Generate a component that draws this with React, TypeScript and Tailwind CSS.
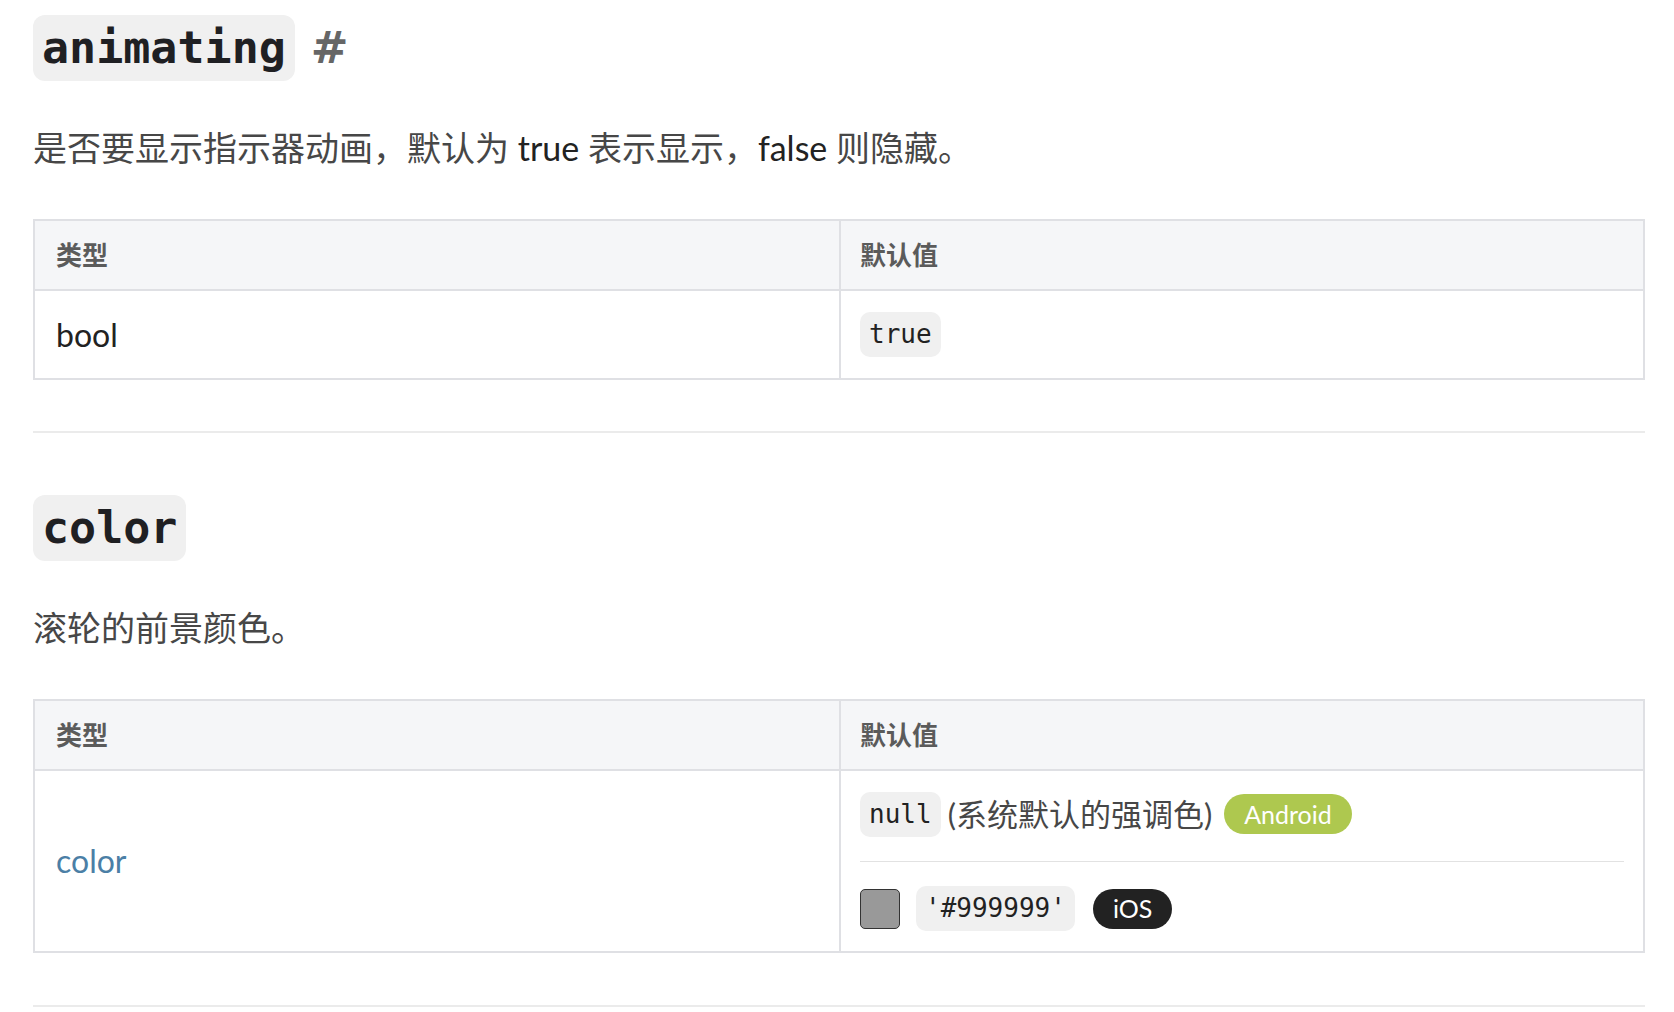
const sans = "font-['Lato','Noto_Sans_CJK_SC',sans-serif]";
const mono = "font-['DejaVu_Sans_Mono','Noto_Sans_CJK_SC',monospace]";

const Code = ({ children }: { children: string }) => (
  <code className={`${mono} inline-block h-[45px] px-[9px] rounded-[10px] bg-[#f0f0f0] text-[26px] leading-[45px] text-[#222]`}>
    {children}
  </code>
);

const Badge = ({ label, color }: { label: string; color: string }) => (
  <span className={`${sans} inline-flex items-center h-[40px] px-[20px] rounded-full text-[25px] leading-none text-white ${color}`}>
    {label}
  </span>
);

const Heading = ({ name, anchor }: { name: string; anchor?: boolean }) => (
  <h3 className="flex items-center h-[66px]">
    <code className={`${mono} px-[9px] rounded-[12px] bg-[#f0f0f0] text-[45px] font-bold leading-[66px] text-[#1f2023]`}>
      {name}
    </code>
    {anchor && (
      <span className="ml-[16px] font-['DejaVu_Sans',sans-serif] text-[45px] font-bold text-[#666]">#</span>
    )}
  </h3>
);

const PropTable = ({ type, pad, children }: { type: React.ReactNode; pad: string; children: React.ReactNode }) => (
  <div className="border-2 border-[#dfe0e4]">
    <div className="grid grid-cols-2 bg-[#f5f6f8] border-b-2 border-[#dfe0e4]">
      <div className="h-[68px] px-[21px] flex items-center text-[26px] font-bold text-[#5b5b5b]">类型</div>
      <div className="h-[68px] px-[19px] flex items-center border-l-2 border-[#dfe0e4] text-[26px] font-bold text-[#5b5b5b]">默认值</div>
    </div>
    <div className="grid grid-cols-2">
      <div className="px-[21px] flex items-center text-[32px] text-[#222]">{type}</div>
      <div className={`px-[19px] ${pad} border-l-2 border-[#dfe0e4] text-[32px] leading-none text-[#222]`}>{children}</div>
    </div>
  </div>
);

const Divider = () => <div className="h-[2px] bg-[#ebebeb]" />;

export default function App() {
  return (
    <div className={`${sans} min-h-screen bg-white`}>
      <div className="ml-[33px] w-[1612px] pt-[15px]">
        {/* animating */}
        <section>
          <Heading name="animating" anchor />
          <p className="mt-[38px] text-[34px] leading-[58px] text-[#474747]">
            是否要显示指示器动画，默认为 <span className="text-[#222]">true</span> 表示显示，
            <span className="text-[#222]">false</span> 则隐藏。
          </p>
          <div className="mt-[42px]">
            <PropTable type="bool" pad="py-[21px]">
              <Code>true</Code>
            </PropTable>
          </div>
          <div className="mt-[51px]">
            <Divider />
          </div>
        </section>

        {/* color */}
        <section className="mt-[62px]">
          <Heading name="color" />
          <p className="mt-[38px] text-[34px] leading-[58px] text-[#474747]">滚轮的前景颜色。</p>
          <div className="mt-[42px]">
            <PropTable type={<a className="text-[#4b7fa6]">color</a>} pad="py-[20px]">
              <div className="flex items-center h-[46px] mb-[24px]">
                <Code>null</Code>
                <span className="ml-[7px] text-[31px] leading-none text-[#474747]">(系统默认的强调色)</span>
                <span className="ml-[12px] flex">
                  <Badge label="Android" color="bg-[#aec84f]" />
                </span>
              </div>
              <div className="h-px bg-[#e2e2e2]" />
              <div className="flex items-center h-[45px] mt-[24px]">
                <span className="w-[40px] h-[40px] rounded-[5px] bg-[#999999] border border-[#333]" />
                <span className="ml-[16px] flex">
                  <Code>'#999999'</Code>
                </span>
                <span className="ml-[18px] flex">
                  <Badge label="iOS" color="bg-[#222]" />
                </span>
              </div>
            </PropTable>
          </div>
          <div className="mt-[52px]">
            <Divider />
          </div>
        </section>
      </div>
    </div>
  );
}
